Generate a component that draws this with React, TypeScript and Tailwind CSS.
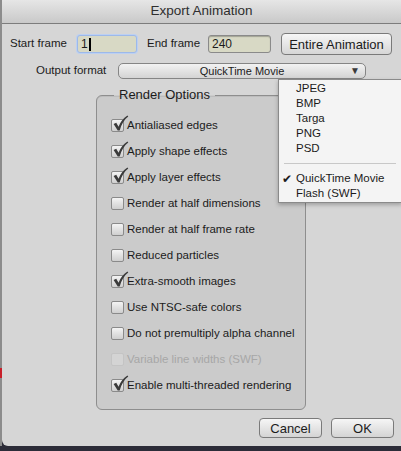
import React from "react";

const font = { fontFamily: '"Liberation Sans", Arial, sans-serif' };

function Check({ checked, disabled }: { checked?: boolean; disabled?: boolean }) {
  return (
    <span className="relative inline-block w-[13px] h-[13px] shrink-0">
      <span
        className={
          disabled
            ? "block w-[13px] h-[13px] rounded-[2px] border border-[#c4c4c4] bg-[#d4d4d4]"
            : "block w-[13px] h-[13px] rounded-[2px] border border-[#8a8a8a] bg-gradient-to-b from-[#f4f4f4] to-[#cfcfcf]"
        }
      />
      {checked && (
        <svg
          className="absolute left-[1px] top-[-4px]"
          width="17"
          height="17"
          viewBox="0 0 16 16"
        >
          <path
            d="M1.5 8.5 L4 7.3 L6.2 11 C8 6.5 10.5 3 14.5 0.5 L15.3 1.5 C11.5 4.5 9 8.5 7.2 14.5 L5.4 14.5 Z"
            fill="#3a3a3a"
          />
        </svg>
      )}
    </span>
  );
}

const options: { label: string; checked?: boolean; disabled?: boolean }[] = [
  { label: "Antialiased edges", checked: true },
  { label: "Apply shape effects", checked: true },
  { label: "Apply layer effects", checked: true },
  { label: "Render at half dimensions" },
  { label: "Render at half frame rate" },
  { label: "Reduced particles" },
  { label: "Extra-smooth images", checked: true },
  { label: "Use NTSC-safe colors" },
  { label: "Do not premultiply alpha channel" },
  { label: "Variable line widths (SWF)", disabled: true },
  { label: "Enable multi-threaded rendering", checked: true },
];

export default function App() {
  return (
    <div
      className="w-[401px] h-[451px] flex flex-col bg-[#2c2c38] overflow-hidden text-[#1b1b1b]"
      style={font}
    >
      <div className="flex h-[446px]">
        {/* strip of the desktop behind the window */}
        <div className="w-[2px] shrink-0 flex flex-col bg-[#8c8c8c]">
          <div className="h-[368px]" />
          <div className="h-[10px] bg-[#c8202a]" />
          <div className="flex-1" />
        </div>

        <div className="relative flex-1 flex flex-col bg-[#d6d6d6] rounded-bl-[6px]">
          {/* title bar */}
          <div className="h-[24px] flex items-center justify-center bg-gradient-to-b from-[#e6e6e6] to-[#c9c9c9] border-b border-[#7c7c7c] text-[13.5px] text-[#2e2e2e]">
            Export Animation
          </div>

          {/* frame range */}
          <div className="flex items-center h-[22px] mt-[9px] text-[11.5px]">
            <span className="ml-[8px] w-[67px]">Start frame</span>
            <div className="w-[60px] h-[18px] flex items-center pl-[3px] bg-[#d8d9c5] border border-[#9db9ea] rounded-[3px] shadow-[0_0_0_1px_#bcd0f2] text-[12px]">
              <span>1</span>
              <span className="w-[2px] h-[13px] bg-black ml-[1px]" />
            </div>
            <span className="ml-[10px] w-[61px]">End frame</span>
            <div className="w-[63px] h-[18px] flex items-center pl-[3px] bg-[#d8d9c5] border border-[#8a8a8a] rounded-[3px] shadow-[inset_0_1px_1px_rgba(0,0,0,0.25)] text-[12px]">
              240
            </div>
            <button className="ml-[10px] w-[111px] h-[22px] rounded-[4px] border border-[#7a7a7a] bg-gradient-to-b from-[#f6f6f6] to-[#d6d6d6] text-[13px] leading-none">
              Entire Animation
            </button>
          </div>

          {/* output format */}
          <div className="flex items-center h-[16px] mt-[8px] text-[11.5px]">
            <span className="ml-[34px] w-[82px]">Output format</span>
            <div className="relative w-[248px] h-[16px] flex items-center justify-center rounded-[5px] border border-[#858585] bg-gradient-to-b from-[#f2f2f2] to-[#d4d4d4] text-[11px]">
              QuickTime Movie
              <span className="absolute right-[5px] top-[1px] text-[10px] leading-[12px] text-[#3a3a3a]">▼</span>
            </div>
          </div>

          {/* render options group */}
          <fieldset className="ml-[94px] mt-[9px] w-[210px] h-[322px] border border-[#8e8e8e] rounded-[6px] bg-[#cbcbcb] pl-[14px] pt-[17px] shadow-[inset_0_1px_0_#bdbdbd]">
            <legend className="ml-[3px] px-[5px] text-[13px] leading-[14px]">Render Options</legend>
            <div className="flex flex-col gap-[13px] text-[11.5px]">
              {options.map((o) => (
                <div key={o.label} className="flex items-center h-[13px] gap-[3px]">
                  <Check checked={o.checked} disabled={o.disabled} />
                  <span className={o.disabled ? "text-[#a7a7a7]" : ""}>{o.label}</span>
                </div>
              ))}
            </div>
          </fieldset>

          {/* dialog buttons */}
          <div className="flex justify-end gap-[9px] mt-[8px] mr-[7px] text-[13px]">
            <button className="w-[63px] h-[20px] rounded-[4px] border border-[#7a7a7a] bg-gradient-to-b from-[#f6f6f6] to-[#d4d4d4] leading-none">
              Cancel
            </button>
            <button className="w-[63px] h-[20px] rounded-[4px] border border-[#7a7a7a] bg-gradient-to-b from-[#f6f6f6] to-[#d4d4d4] leading-none">
              OK
            </button>
          </div>

          {/* open popup menu */}
          <div className="absolute left-[276px] top-[79px] w-[124px] h-[124px] bg-[#f4f4f4] border border-[#8a8a8a] shadow-[0_2px_4px_rgba(0,0,0,0.25)] pt-[1px] text-[11.5px]">
            {["JPEG", "BMP", "Targa", "PNG", "PSD"].map((t) => (
              <div key={t} className="h-[15px] flex items-center pl-[17px]">
                {t}
              </div>
            ))}
            <div className="h-[15px] flex items-center">
              <div className="ml-[5px] w-[112px] h-px bg-[#c8c8c8]" />
            </div>
            <div className="h-[15px] flex items-center pl-[3px]">
              <span className="w-[14px] text-[12px]">✔</span>
              QuickTime Movie
            </div>
            <div className="h-[15px] flex items-center pl-[17px]">Flash (SWF)</div>
          </div>
        </div>
      </div>
      <div className="h-[5px] bg-[#2c2c38]" />
    </div>
  );
}
